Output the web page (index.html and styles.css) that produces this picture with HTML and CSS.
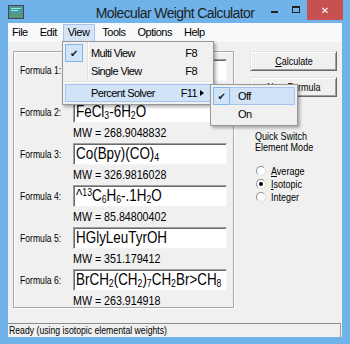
FILE: index.html
```html
<!DOCTYPE html>
<html lang="en">
<head>
    <meta charset="UTF-8">
    <title>Molecular Weight Calculator</title>
    <link rel="stylesheet" href="styles.css">
</head>
<body>
    <div class="window">
        <div class="titlebar">
            <svg class="app-icon" width="16" height="14" viewBox="0 0 16 14">
                <rect x="0.5" y="0.5" width="15" height="13" fill="#6f8190" stroke="#3c4a56"/>
                <rect x="2" y="2" width="12" height="6" fill="#37a3a8"/>
                <rect x="3" y="3" width="10" height="1" fill="#9fe0d8"/>
                <rect x="3" y="5" width="7" height="1" fill="#9fe0d8"/>
                <rect x="2" y="9" width="12" height="3" fill="#4fa070"/>
            </svg>
            <div class="title">Molecular Weight Calculator</div>
            <div class="controls">
                <span class="ctl min"><i></i></span>
                <span class="ctl max"><i></i></span>
                <span class="ctl close">&#x2715;</span>
            </div>
        </div>

        <div class="frame">
            <div class="menubar">
                <span class="menu-item">File</span>
                <span class="menu-item">Edit</span>
                <span class="menu-item open">View</span>
                <span class="menu-item">Tools</span>
                <span class="menu-item">Options</span>
                <span class="menu-item">Help</span>
            </div>

            <div class="main">
                <div class="formulas">
                    <div class="row">
                        <span class="label">Formula 1:</span>
                        <div class="formula-box"><span class="sq">C<sub>6</sub>H<sub>5</sub>Cl</span></div>
                        <span class="mw">MW = 112.5569</span>
                    </div>
                    <div class="row">
                        <span class="label">Formula 2:</span>
                        <div class="formula-box"><span class="sq">FeCl<sub>3</sub>-6H<sub>2</sub>O</span></div>
                        <span class="mw">MW = 268.9048832</span>
                    </div>
                    <div class="row">
                        <span class="label">Formula 3:</span>
                        <div class="formula-box"><span class="sq">Co(Bpy)(CO)<sub>4</sub></span></div>
                        <span class="mw">MW = 326.9816028</span>
                    </div>
                    <div class="row">
                        <span class="label">Formula 4:</span>
                        <div class="formula-box"><span class="sq">^<sup>13</sup>C<sub>6</sub>H<sub>6</sub>-.1H<sub>2</sub>O</span></div>
                        <span class="mw">MW = 85.84800402</span>
                    </div>
                    <div class="row">
                        <span class="label">Formula 5:</span>
                        <div class="formula-box"><span class="sq">HGlyLeuTyrOH</span></div>
                        <span class="mw">MW = 351.179412</span>
                    </div>
                    <div class="row">
                        <span class="label">Formula 6:</span>
                        <div class="formula-box"><span class="sq">BrCH<sub>2</sub>(CH<sub>2</sub>)<sub>7</sub>CH<sub>2</sub>Br&gt;CH<sub>8</sub></span></div>
                        <span class="mw">MW = 263.914918</span>
                    </div>
                </div>

                <div class="side">
                    <button class="btn"><span class="sq"><u>C</u>alculate</span></button>
                    <button class="btn"><span class="sq"><u>N</u>ew Formula</span></button>
                    <p class="mode-title">Quick Switch<br>Element Mode</p>
                    <div class="radios">
                        <label class="radio"><span class="dot"></span><span class="sq"><u>A</u>verage</span></label>
                        <label class="radio"><span class="dot checked"></span><span class="sq"><u>I</u>sotopic</span></label>
                        <label class="radio"><span class="dot"></span><span class="sq">Integer</span></label>
                    </div>
                </div>
            </div>

            <div class="statusbar">
                <div class="panel"><span class="sq">Ready (using isotopic elemental weights)</span></div>
            </div>
        </div>

        <!-- open View menu -->
        <div class="dropdown view-menu">
            <div class="mi"><span class="icon checked">&#x2714;</span><span class="text">Multi View</span><span class="key">F8</span></div>
            <div class="mi"><span class="icon"></span><span class="text">Single View</span><span class="key">F8</span></div>
            <div class="sep"></div>
            <div class="mi hot"><span class="icon"></span><span class="text">Percent Solver</span><span class="key">F11</span><span class="arrow"></span></div>
        </div>

        <div class="dropdown sub-menu">
            <div class="mi hot"><span class="icon checked">&#x2714;</span><span class="text">Off</span></div>
            <div class="mi"><span class="icon"></span><span class="text">On</span></div>
        </div>
    </div>
</body>
</html>
```

FILE: styles.css
```css
body {
    margin: 0;
    padding: 0;
    background-color: #ffffff;
}

.window {
    position: relative;
    width: 350px;
    height: 344px;
    background-color: #6fb3ea;
    display: flex;
    flex-direction: column;
    font-family: "Liberation Sans", Arial, sans-serif;
    color: #000;
}

/* the old VB controls draw a narrow font */
.sq {
    display: inline-block;
    transform: scaleX(0.82);
    transform-origin: 0 50%;
    white-space: nowrap;
}

/* title bar */

.titlebar {
    height: 23px;
    display: grid;
    grid-template-columns: 1fr auto 1fr;
    align-items: start;
}

.app-icon {
    margin: 5px 0 0 8px;
}

.title {
    font-size: 14px;
    line-height: 15px;
    letter-spacing: -0.6px;
    margin-top: 6px;
    color: #1e1e1e;
    white-space: nowrap;
}

.controls {
    justify-self: end;
    display: flex;
    margin-right: 7px;
}

.ctl {
    height: 20px;
    width: 22px;
    display: flex;
    align-items: center;
    justify-content: center;
}

.ctl.min i {
    display: block;
    width: 7px;
    height: 2px;
    margin-top: 4px;
    background-color: #222;
}

.ctl.max i {
    display: block;
    width: 6px;
    height: 4px;
    border: 1px solid #222;
    border-top-width: 2px;
    margin-top: -2px;
}

.ctl.close {
    width: 36px;
    background-color: #c75050;
    color: #fff;
    font-family: "DejaVu Sans", sans-serif;
    font-size: 10px;
    font-weight: bold;
}

/* client frame */

.frame {
    flex: 1;
    margin: 0 8px 7px;
    display: flex;
    flex-direction: column;
    background-color: #f0f0f0;
}

.menubar {
    height: 19px;
    display: flex;
    gap: 3px;
    background-color: #f8f9fa;
    font-size: 11px;
    letter-spacing: -0.5px;
}

.menu-item {
    height: 17px;
    margin-top: 1px;
    line-height: 17px;
    padding: 0 5px 0 4px;
    box-sizing: border-box;
}

.menu-item.open {
    background-color: #d5e5f5;
    box-shadow: inset 0 0 0 1px #a3c5ec;
    height: 18px;
    margin-left: -2px;
    padding: 0 6px 0 5px;
}

.main {
    height: 280px;
    display: flex;
}

/* formula group */

.formulas {
    margin: 9px 0 0 5px;
    width: 221px;
    height: 257px;
    box-sizing: border-box;
    padding-top: 7px;
    border: 1px solid #a9a9a9;
    box-shadow: 1px 1px 0 #fff, inset 1px 1px 0 #fff;
}

.row {
    display: grid;
    grid-template-columns: 53px 154px;
    grid-template-rows: 22px 20px;
    padding-left: 6px;
}

.label {
    align-self: center;
    font-size: 10.5px;
    transform: scaleX(0.82);
    transform-origin: 0 50%;
    white-space: nowrap;
}

.formula-box {
    box-sizing: border-box;
    height: 22px;
    background-color: #fff;
    border: 1px solid;
    border-color: #a0a0a0 #f4f4f4 #f4f4f4 #a0a0a0;
    box-shadow: inset 1px 1px 0 #696969;
    padding: 0 2px;
    font-size: 17px;
    line-height: 20px;
    white-space: nowrap;
    overflow: hidden;
}

.formula-box .sq {
    transform: scaleX(0.79);
}

.formula-box sub {
    font-size: 11px;
    vertical-align: -2px;
    line-height: 0;
}

.formula-box sup {
    font-size: 11px;
    vertical-align: 5px;
    line-height: 0;
}

.mw {
    grid-column: 2;
    font-size: 13px;
    line-height: 20px;
    white-space: nowrap;
    transform: scaleX(0.82);
    transform-origin: 0 50%;
}

/* right side */

.side {
    display: flex;
    flex-direction: column;
    align-items: flex-start;
    padding: 9px 0 0 16px;
}

.btn {
    width: 87px;
    height: 20px;
    margin: 0 0 6px;
    padding: 0;
    background-color: #f0f0f0;
    border: 1px solid;
    border-color: #e3e3e3 #696969 #696969 #e3e3e3;
    box-shadow: inset 1px 1px 0 #fff, inset -1px -1px 0 #a0a0a0;
    font-family: "Liberation Sans", sans-serif;
    font-size: 11px;
    color: #000;
}

.btn .sq {
    transform-origin: 50% 50%;
}

.mode-title {
    margin: 28px 0 0 5px;
    font-size: 11px;
    line-height: 11px;
    transform: scaleX(0.82);
    transform-origin: 0 0;
    white-space: nowrap;
}

.radios {
    margin-top: 11px;
    padding-left: 6px;
    display: flex;
    flex-direction: column;
}

.radio {
    height: 13px;
    display: flex;
    align-items: center;
    gap: 5px;
    font-size: 11px;
}

.dot {
    width: 10px;
    height: 10px;
    box-sizing: border-box;
    border-radius: 50%;
    background-color: #fff;
    border: 1px solid;
    border-color: #8f8f8f #dedede #dedede #8f8f8f;
    display: flex;
    align-items: center;
    justify-content: center;
}

.dot.checked::after {
    content: "";
    width: 4px;
    height: 4px;
    border-radius: 50%;
    background-color: #000;
}

/* status bar */

.statusbar {
    height: 15px;
    padding-top: 1px;
    box-sizing: border-box;
}

.panel {
    height: 14px;
    margin-right: 1px;
    box-sizing: border-box;
    border-top: 1px solid #8a8a8a;
    border-right: 1px solid #a0a0a0;
    padding-left: 1px;
    font-size: 11px;
    line-height: 13px;
}

.panel .sq {
    transform: scaleX(0.79);
}

/* menus */

.dropdown {
    position: absolute;
    box-sizing: border-box;
    padding: 2px;
    background-color: #f0f0f0;
    border: 1px solid #979797;
    box-shadow: 2px 2px 3px rgba(0, 0, 0, 0.3);
    font-size: 11px;
    letter-spacing: -0.6px;
}

.view-menu {
    left: 62px;
    top: 41px;
    width: 152px;
    background-image: linear-gradient(to right, transparent 24px, #e2e3e3 24px, #e2e3e3 25px, #fff 25px, #fff 26px, transparent 26px);
    background-size: 100% 38px;
    background-repeat: no-repeat;
}

.sub-menu {
    left: 210px;
    top: 84px;
    width: 88px;
}

.mi {
    position: relative;
    height: 18px;
    display: flex;
    align-items: center;
}

.mi.hot {
    background-color: #d1e3f6;
    box-shadow: inset 0 0 0 1px #a4c6ec;
}

.mi .icon {
    width: 18px;
    height: 18px;
    box-sizing: border-box;
    display: flex;
    align-items: center;
    justify-content: center;
    font-family: "DejaVu Sans", sans-serif;
    font-size: 10px;
    color: #1a1a1a;
}

.sub-menu .mi .icon {
    width: 17px;
}

.mi .icon.checked {
    background-color: #cfe4f8;
    border: 1px solid #82b6ea;
}

.mi .text {
    margin-left: 8px;
}

.mi .key {
    margin-left: auto;
    margin-right: 14px;
}

.mi .arrow {
    position: absolute;
    right: 7px;
    top: 6px;
    border-left: 4px solid #000;
    border-top: 3px solid transparent;
    border-bottom: 3px solid transparent;
}

.sep {
    height: 2px;
    box-sizing: border-box;
    border-top: 1px solid #e2e3e3;
    border-bottom: 1px solid #fff;
    margin: 1px 0;
}
```
